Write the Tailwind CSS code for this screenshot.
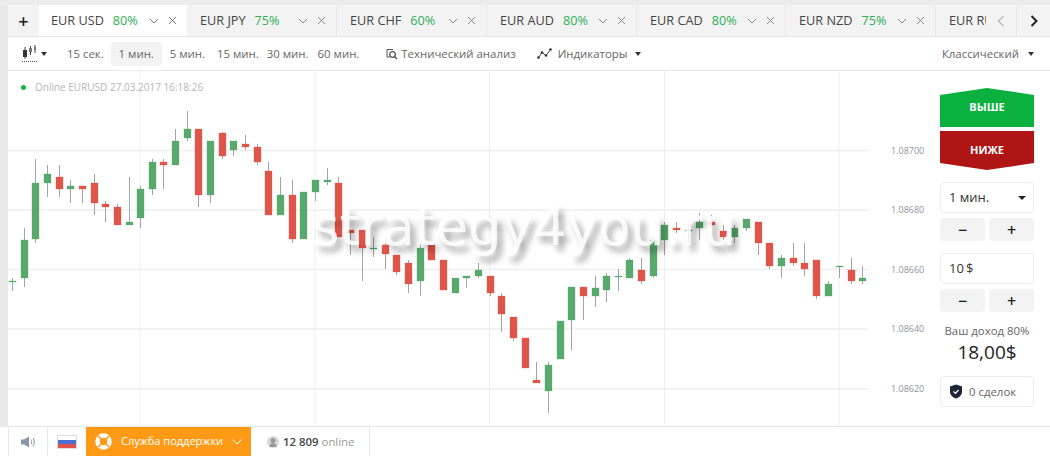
<!DOCTYPE html>
<html lang="en">
  <head>
    <meta charset="UTF-8" />
    <meta name="viewport" content="width=device-width, initial-scale=1.0" />
    <title>EUR USD</title>
    <script src="https://cdn.jsdelivr.net/npm/@tailwindcss/browser@4"></script>
  </head>
  <body class="w-[1050px] h-[456px] overflow-hidden bg-white font-['Open_Sans',sans-serif] text-[#555]">
    <div class="h-[5px] bg-[#ececec]"></div>

    <!-- tabs -->
    <div class="flex h-[32px] pl-2 bg-[#e9e9e9]">
      <div class="flex flex-1 h-[32px] bg-[#f3f3f3] border-b border-[#e6e6e6] overflow-hidden whitespace-nowrap">
        <div class="w-[31px] shrink-0 flex items-center justify-center text-[#222] text-lg font-semibold leading-none">+</div>
        <div class="w-[148px] bg-white flex shrink-0 items-center pl-3 pr-[10px] gap-[9px] text-[12.7px]">
          <span class="text-[#444] font-medium">EUR USD</span><span class="text-[#2eaf57] font-medium">80%</span>
          <svg class="ml-auto" width="28" height="10" viewBox="0 0 28 10" fill="none" stroke="#777"><path d="M1 3l4 4 4-4M20 1l7 7M27 1l-7 7" /></svg>
        </div>
        <div class="w-[150px] border-r border-[#e8e8e8] flex shrink-0 items-center pl-[13px] pr-[10px] gap-[9px] text-[12.7px]">
          <span class="text-[#444] font-medium">EUR JPY</span><span class="text-[#2eaf57] font-medium">75%</span>
          <svg class="ml-auto" width="28" height="10" viewBox="0 0 28 10" fill="none" stroke="#888"><path d="M1 3l4 4 4-4M20 1l7 7M27 1l-7 7" /></svg>
        </div>
        <div class="w-[150px] border-r border-[#e8e8e8] flex shrink-0 items-center pl-[13px] pr-[10px] gap-[9px] text-[12.7px]">
          <span class="text-[#444] font-medium">EUR CHF</span><span class="text-[#2eaf57] font-medium">60%</span>
          <svg class="ml-auto" width="28" height="10" viewBox="0 0 28 10" fill="none" stroke="#888"><path d="M1 3l4 4 4-4M20 1l7 7M27 1l-7 7" /></svg>
        </div>
        <div class="w-[150px] border-r border-[#e8e8e8] flex shrink-0 items-center pl-[13px] pr-[10px] gap-[9px] text-[12.7px]">
          <span class="text-[#444] font-medium">EUR AUD</span><span class="text-[#2eaf57] font-medium">80%</span>
          <svg class="ml-auto" width="28" height="10" viewBox="0 0 28 10" fill="none" stroke="#888"><path d="M1 3l4 4 4-4M20 1l7 7M27 1l-7 7" /></svg>
        </div>
        <div class="w-[149px] border-r border-[#e8e8e8] flex shrink-0 items-center pl-[13px] pr-[10px] gap-[9px] text-[12.7px]">
          <span class="text-[#444] font-medium">EUR CAD</span><span class="text-[#2eaf57] font-medium">80%</span>
          <svg class="ml-auto" width="28" height="10" viewBox="0 0 28 10" fill="none" stroke="#888"><path d="M1 3l4 4 4-4M20 1l7 7M27 1l-7 7" /></svg>
        </div>
        <div class="w-[150px] border-r border-[#e8e8e8] flex shrink-0 items-center pl-[13px] pr-[10px] gap-[9px] text-[12.7px]">
          <span class="text-[#444] font-medium">EUR NZD</span><span class="text-[#2eaf57] font-medium">75%</span>
          <svg class="ml-auto" width="28" height="10" viewBox="0 0 28 10" fill="none" stroke="#888"><path d="M1 3l4 4 4-4M20 1l7 7M27 1l-7 7" /></svg>
        </div>
        <div class="w-[50px] shrink-0 overflow-hidden flex items-center pl-[13px] text-[12.7px]">
          <span class="text-[#444] font-medium">EUR RUB</span>
        </div>
        <div class="w-[31px] shrink-0 border-r border-[#e8e8e8] flex items-center justify-center">
          <svg width="8" height="12" viewBox="0 0 8 12" fill="none" stroke="#bbb" stroke-width="1.4"><path d="M6.5 1L1.5 6l5 5" /></svg>
        </div>
        <div class="flex-1 flex items-center justify-center">
          <svg width="8" height="12" viewBox="0 0 8 12" fill="none" stroke="#222" stroke-width="2"><path d="M1.5 1l5 5-5 5" /></svg>
        </div>
      </div>
    </div>

    <!-- toolbar -->
    <div class="flex pl-2 bg-[#e9e9e9]">
      <div class="flex flex-1 items-center h-[34px] bg-white border-b border-[#e8e8e8] text-[11.4px] text-[#666] whitespace-nowrap">
        <svg class="ml-[14px]" width="15" height="18" viewBox="0 0 15 18" fill="none">
          <path d="M3 2v12M8.500 1v9M13 0v8" stroke="#444" />
          <rect x="1" y="5" width="4" height="7" fill="#333" />
          <rect x="7" y="3" width="3" height="4" fill="#777" />
          <rect x="12" y="2" width="2" height="3" fill="#777" />
          <path d="M0 16.500h15" stroke="#555" stroke-dasharray="1 1" />
        </svg>
        <span class="ml-1 w-0 h-0 border-x-[3.5px] border-x-transparent border-t-[4px] border-t-[#333]"></span>
        <span class="ml-[20px]">15 сек.</span>
        <span class="ml-[7px] w-[51px] h-[24px] flex items-center justify-center rounded bg-[#f3f3f3]">1 мин.</span>
        <span class="ml-[8px]">5 мин.</span>
        <span class="ml-[12px]">15 мин.</span>
        <span class="ml-[8px]">30 мин.</span>
        <span class="ml-[9px]">60 мин.</span>
        <svg class="ml-[27px]" width="12" height="12" viewBox="0 0 12 12" fill="none" stroke="#555"><path d="M1 4V1.500h6M1 4v5h3" /><circle cx="6.500" cy="6.500" r="2.800" stroke-width="1.300" /><path d="M8.500 8.500L11 11" stroke-width="1.500" /></svg>
        <span class="ml-[3px]">Технический анализ</span>
        <svg class="ml-[21px]" width="15" height="11" viewBox="0 0 15 11" fill="none"><path d="M1.500 9.500L5 4.500l4 3L13.500 1.500" stroke="#444" /><circle cx="1.500" cy="9.500" r="1.300" fill="#333" /><circle cx="5" cy="4.500" r="1.300" fill="#333" /><circle cx="9" cy="7.500" r="1.300" fill="#333" /><circle cx="13.500" cy="1.500" r="1.300" fill="#333" /></svg>
        <span class="ml-[6px]">Индикаторы</span>
        <span class="ml-[8px] w-0 h-0 border-x-[3.5px] border-x-transparent border-t-[4px] border-t-[#333]"></span>
        <span class="ml-auto">Классический</span>
        <span class="ml-[9px] mr-[16px] w-0 h-0 border-x-[3.5px] border-x-transparent border-t-[4px] border-t-[#333]"></span>
      </div>
    </div>

    <!-- chart + trade panel -->
    <div class="flex h-[355px]">
      <div class="w-2 bg-[#e9e9e9]"></div>
      <div class="relative w-[924px] overflow-hidden">
        <svg id="chart" class="absolute inset-0" width="924" height="355"></svg>
        <div class="relative flex items-center h-[32px] pl-[13px] gap-[9px] text-[10px] text-[#b5b5b5]">
          <span class="w-[5px] h-[5px] rounded-full bg-[#12b53f]"></span>
          <span>Online EURUSD 27.03.2017 16:18:26</span>
        </div>
        <div class="absolute left-[304px] top-[118px] text-[53px] leading-[76px] whitespace-nowrap font-['DejaVu_Sans',sans-serif] text-white/85 [text-shadow:5px_6px_6px_rgba(0,0,0,0.35)]">strategy4you.ru</div>
      </div>

      <div class="flex-1 flex flex-col pt-[17px] pl-2 pr-4">
        <div class="h-[39px] flex items-center justify-center text-white text-[11px] font-bold bg-[#0ab13e] [clip-path:polygon(0_7px,50%_0,100%_7px,100%_100%,0_100%)]">ВЫШЕ</div>
        <div class="mt-[4px] h-[39px] flex items-center justify-center text-white text-[11px] font-bold bg-[#b01515] [clip-path:polygon(0_0,100%_0,100%_32px,50%_100%,0_32px)]">НИЖЕ</div>

        <div class="mt-[12px] h-[31px] flex items-center justify-between pl-2 pr-[7px] border border-[#ececec] rounded text-[13px] text-[#333]">
          <span>1 мин.</span>
          <span class="w-0 h-0 border-x-[4px] border-x-transparent border-t-[4px] border-t-[#222]"></span>
        </div>
        <div class="mt-[5px] flex gap-[4px]">
          <div class="flex-1 h-[23px] flex items-center justify-center rounded bg-[#f3f3f3] text-[#222] text-base font-semibold leading-none">−</div>
          <div class="flex-1 h-[23px] flex items-center justify-center rounded bg-[#f3f3f3] text-[#222] text-base font-semibold leading-none">+</div>
        </div>

        <div class="mt-[12px] h-[31px] flex items-center pl-2 border border-[#ececec] rounded text-[13px] text-[#333]">10&#8201;$</div>
        <div class="mt-[5px] flex gap-[4px]">
          <div class="flex-1 h-[23px] flex items-center justify-center rounded bg-[#f3f3f3] text-[#222] text-base font-semibold leading-none">−</div>
          <div class="flex-1 h-[23px] flex items-center justify-center rounded bg-[#f3f3f3] text-[#222] text-base font-semibold leading-none">+</div>
        </div>

        <div class="mt-[10px] text-center text-[11.4px] leading-[18px] text-[#666] whitespace-nowrap">Ваш доход 80%</div>
        <div class="text-center text-[19px] leading-[24px] font-medium text-[#222]">18,00$</div>

        <div class="mt-[12px] h-[31px] flex items-center pl-[8px] gap-[6px] border border-[#ececec] rounded text-[11.4px] text-[#666]">
          <svg width="14" height="15" viewBox="0 0 14 15"><path d="M7 .5l6 2v5c0 3.500-2.500 5.800-6 7-3.500-1.200-6-3.500-6-7v-5z" fill="#1c2533" /><path d="M4.500 7.500l2 1.800 3-3.300" fill="none" stroke="#fff" stroke-width="1.200" /></svg>
          <span>0 сделок</span>
        </div>
      </div>
    </div>

    <!-- footer -->
    <div class="flex h-[30px] border-t border-[#e8e8e8] text-[11.4px] whitespace-nowrap">
      <div class="w-[9px] border-r border-[#e8e8e8]"></div>
      <div class="w-[39px] border-r border-[#e8e8e8] flex items-center justify-center">
        <svg width="14" height="12" viewBox="0 0 14 12"><path d="M0 3.500h3L8 .5v11L3 8.500H0z" fill="#8a97a5" /><path d="M10 3.500c1 1.500 1 3.500 0 5M12 2c1.700 2.300 1.700 5.700 0 8" fill="none" stroke="#8a97a5" /></svg>
      </div>
      <div class="w-[38px] flex items-center justify-center">
        <div class="w-[20px] h-[14px] flex flex-col border border-[#ddd]">
          <div class="flex-1 bg-white"></div>
          <div class="flex-1 bg-[#4b6fd0]"></div>
          <div class="flex-1 bg-[#e2514a]"></div>
        </div>
      </div>
      <div class="w-[165px] bg-[#ff9a17] flex items-center pl-[9px] text-white">
        <svg width="17" height="17" viewBox="0 0 17 17" fill="none"><circle cx="8.500" cy="8.500" r="6" stroke="#fff" stroke-width="4.500" /><path d="M3 3l3 3M14 3l-3 3M3 14l3-3M14 14l-3-3" stroke="#ff9a17" stroke-width="1.500" /></svg>
        <span class="ml-[9px] text-[11px]">Служба поддержки</span>
        <svg class="ml-[9px]" width="10" height="6" viewBox="0 0 10 6" fill="none" stroke="#fff"><path d="M.5.500L5 5 9.500.500" /></svg>
      </div>
      <div class="w-[119px] border-r border-[#e8e8e8] flex items-center pl-4 text-[#999]">
        <svg width="12" height="12" viewBox="0 0 12 12"><circle cx="6" cy="6" r="6" fill="#d9d9d9" /><circle cx="6" cy="4.500" r="2.500" fill="#999" /><path d="M2.500 11c0-3 1.500-4 3.500-4s3.500 1 3.500 4z" fill="#999" /></svg>
        <b class="ml-[4px] font-semibold text-[#444]">12 809</b>
        <span class="ml-[3px]">online</span>
      </div>
    </div>

    <script>
      // [wick top, wick bottom, body top, body bottom, colour], y in page pixels
      const candles = [
        [278,291,281,282,"g"],[228,287,240,278,"g"],[159,243,183,239,"g"],[165,197,174,183,"g"],[165,197,177,189,"r"],
        [180,203,186,189,"g"],[186,203,186,189,"r"],[174,215,183,203,"r"],[201,222,204,207,"r"],[204,225,207,225,"r"],
        [177,225,222,225,"g"],[186,228,189,218,"g"],[159,195,162,189,"g"],[159,189,162,165,"r"],[129,165,141,165,"g"],
        [111,141,129,138,"g"],[129,207,129,195,"r"],[141,203,141,195,"g"],[132,159,133,156,"r"],[141,156,141,150,"g"],
        [135,150,144,147,"r"],[144,165,147,162,"r"],[162,215,171,215,"r"],[177,215,195,215,"g"],[180,243,195,239,"r"],
        [192,239,192,239,"g"],[180,201,180,192,"g"],[168,185,180,182,"g"],[177,237,183,237,"r"],[230,255,230,233,"r"],
        [230,281,230,248,"r"],[237,257,248,249,"g"],[243,269,245,254,"r"],[255,275,255,272,"r"],[260,293,263,284,"r"],
        [245,296,248,281,"g"],[245,260,245,260,"r"],[260,290,260,290,"r"],[278,293,278,293,"g"],[276,288,276,278,"g"],
        [263,278,270,276,"g"],[276,296,276,293,"r"],[293,332,296,314,"r"],[317,341,317,338,"r"],[338,368,338,368,"r"],
        [362,383,380,383,"r"],[362,413,365,391,"g"],[321,359,321,359,"g"],[287,350,287,320,"g"],[287,320,287,296,"r"],
        [276,307,288,296,"g"],[273,302,276,290,"g"],[269,291,276,277,"g"],[258,278,260,278,"g"],[258,284,270,281,"r"],
        [237,278,240,276,"g"],[222,255,225,240,"g"],[222,233,228,230,"r"],[225,243,230,231,"g"],[213,240,222,228,"g"],
        [215,228,222,225,"r"],[225,240,231,237,"r"],[225,243,228,237,"g"],[219,231,219,228,"g"],[222,255,222,243,"r"],
        [243,269,243,266,"r"],[255,278,258,266,"g"],[243,266,258,263,"r"],[243,276,263,269,"r"],[260,299,260,296,"r"],
        [281,296,284,296,"g"],[266,278,266,267,"g"],[258,284,270,281,"r"],[266,284,278,281,"g"],
      ];

      // chart is offset from the page by 8px left and 71px top
      const ox = 8, oy = 71;
      let html = "";

      [140, 315, 489.5, 664.5, 839].forEach((x) => {
        html += `<line x1="${x - ox}" x2="${x - ox}" y1="0" y2="355" stroke="#efefef" />`;
      });
      [150.5, 210, 269.5, 329, 389].forEach((y) => {
        html += `<line x1="0" x2="861" y1="${y - oy}" y2="${y - oy}" stroke="#efefef" stroke-width="1.500" />`;
      });
      ["1.08700", "1.08680", "1.08660", "1.08640", "1.08620"].forEach((label, i) => {
        const y = [150.5, 210, 269.5, 329, 389][i] - oy + 3;
        html += `<text x="883" y="${y}" font-size="9" fill="#8c949c">${label}</text>`;
      });
      candles.forEach(([wt, wb, bt, bb, c], i) => {
        const x = Math.round(12 + i * 11.65) - ox;
        const fill = c === "g" ? "#57a96c" : "#e0554a";
        html += `<line x1="${x + 0.5}" x2="${x + 0.5}" y1="${wt - oy}" y2="${wb - oy}" stroke="#a3a3a3" />`;
        html += `<rect x="${x - 3}" y="${bt - oy}" width="7" height="${bb - bt}" fill="${fill}" stroke="${fill}" stroke-opacity="0.3" />`;
      });
      document.querySelector("#chart").innerHTML = html;
    </script>
  </body>
</html>
